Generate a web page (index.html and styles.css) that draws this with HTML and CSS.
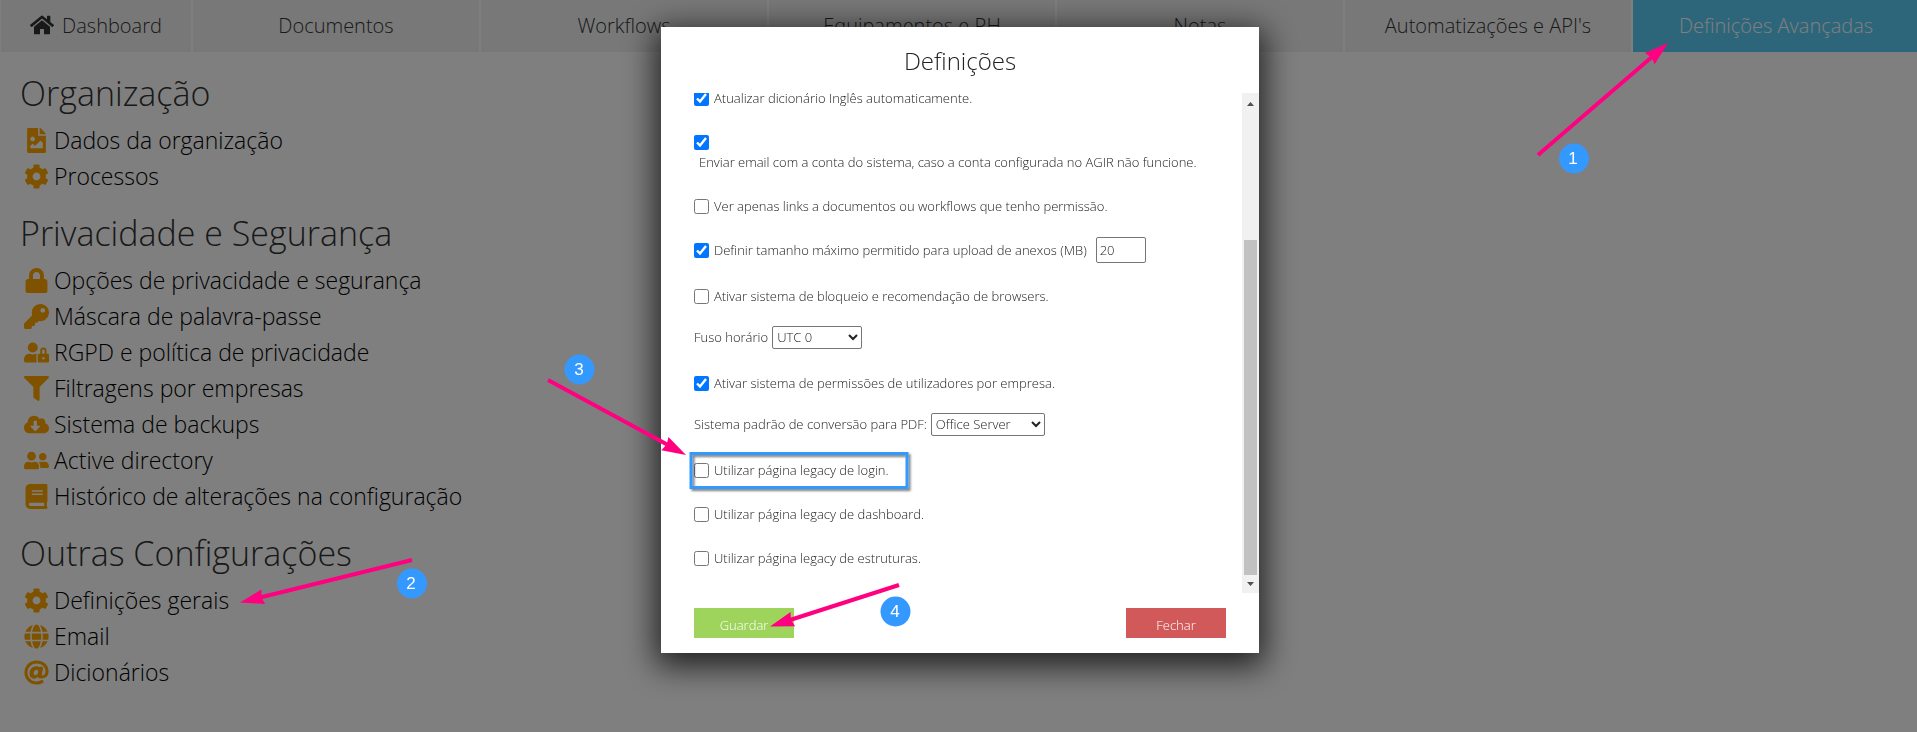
FILE: index.html
```html
<!DOCTYPE html>
<html lang="pt">
<head>
<meta charset="utf-8">
<title>Definições Avançadas</title>
<link rel="stylesheet" href="styles.css">
</head>
<body>
<svg class="sprite" aria-hidden="true">
  <symbol id="i-home" viewBox="0 0 576 512"><path d="M280.37 148.26L96 300.11V464a16 16 0 0 0 16 16l112.06-.29a16 16 0 0 0 15.92-16V368a16 16 0 0 1 16-16h64a16 16 0 0 1 16 16v95.64a16 16 0 0 0 16 16.05L464 480a16 16 0 0 0 16-16V300L295.67 148.26a12.19 12.19 0 0 0-15.3 0zM571.6 251.47L488 182.56V44.05a12 12 0 0 0-12-12h-56a12 12 0 0 0-12 12v72.61L318.47 43a48 48 0 0 0-61 0L4.34 251.47a12 12 0 0 0-1.6 16.9l25.5 31A12 12 0 0 0 45.15 301l235.22-193.74a12.19 12.19 0 0 1 15.3 0L530.9 301a12 12 0 0 0 16.9-1.6l25.5-31a12 12 0 0 0-1.7-16.93z"/></symbol>
  <symbol id="i-file" viewBox="0 0 384 512"><path d="M384 121.941V128H256V0h6.059a24 24 0 0 1 16.97 7.029l97.941 97.941a24.002 24.002 0 0 1 7.03 16.971zM248 160c-13.2 0-24-10.8-24-24V0H24C10.745 0 0 10.745 0 24v464c0 13.255 10.745 24 24 24h336c13.255 0 24-10.745 24-24V160H248zm-135.455 16c26.51 0 48 21.49 48 48s-21.49 48-48 48-48-21.49-48-48 21.491-48 48-48zm208 240h-256l.485-48.485L104.545 328c4.686-4.686 11.799-4.201 16.485.485L160.545 368 264.06 264.485c4.686-4.686 12.284-4.686 16.971 0L320.545 304v112z"/></symbol>
  <symbol id="i-cog" viewBox="0 0 512 512"><path d="M487.4 315.7l-42.6-24.6c4.3-23.2 4.3-47 0-70.2l42.6-24.6c4.9-2.8 7.1-8.6 5.5-14-11.1-35.6-30-67.8-54.7-94.6-3.8-4.1-10-5.1-14.8-2.3L380.8 110c-17.9-15.4-38.5-27.3-60.8-35.1V25.8c0-5.6-3.9-10.5-9.4-11.7-36.7-8.2-74.3-7.8-109.2 0-5.5 1.2-9.4 6.1-9.4 11.7V75c-22.2 7.9-42.8 19.8-60.8 35.1L88.7 85.5c-4.9-2.8-11-1.9-14.8 2.3-24.7 26.7-43.6 58.9-54.7 94.6-1.7 5.4.6 11.2 5.5 14L67.3 221c-4.3 23.2-4.3 47 0 70.2l-42.6 24.6c-4.9 2.8-7.1 8.6-5.5 14 11.1 35.6 30 67.8 54.7 94.6 3.8 4.1 10 5.1 14.8 2.3l42.6-24.6c17.9 15.4 38.5 27.3 60.8 35.1v49.2c0 5.6 3.9 10.5 9.4 11.7 36.7 8.2 74.3 7.8 109.2 0 5.5-1.2 9.4-6.1 9.4-11.7v-49.2c22.2-7.9 42.8-19.8 60.8-35.1l42.6 24.6c4.9 2.8 11 1.9 14.8-2.3 24.7-26.7 43.6-58.9 54.7-94.6 1.5-5.5-.7-11.3-5.6-14.1zM256 336c-44.1 0-80-35.9-80-80s35.9-80 80-80 80 35.9 80 80-35.9 80-80 80z"/></symbol>
  <symbol id="i-lock" viewBox="0 0 448 512"><path d="M400 224h-24v-72C376 68.2 307.8 0 224 0S72 68.2 72 152v72H48c-26.5 0-48 21.5-48 48v192c0 26.5 21.5 48 48 48h352c26.5 0 48-21.5 48-48V272c0-26.5-21.5-48-48-48zm-104 0H152v-72c0-39.7 32.3-72 72-72s72 32.3 72 72v72z"/></symbol>
  <symbol id="i-key" viewBox="0 0 512 512"><path d="M512 176.001C512 273.203 433.202 352 336 352c-11.22 0-22.19-1.062-32.827-3.069l-24.012 27.014A23.999 23.999 0 0 1 261.223 384H224v40c0 13.255-10.745 24-24 24h-40v40c0 13.255-10.745 24-24 24H24c-13.255 0-24-10.745-24-24v-78.059c0-6.365 2.529-12.47 7.029-16.971l161.802-161.802C163.108 213.814 160 195.271 160 176 160 78.798 238.797.001 335.999 0 433.488-.001 512 78.511 512 176.001zM336 128c0 26.51 21.49 48 48 48s48-21.49 48-48-21.49-48-48-48-48 21.49-48 48z"/></symbol>
  <symbol id="i-userlock" viewBox="0 0 640 512"><path d="M224 256A128 128 0 1 0 96 128a128 128 0 0 0 128 128zm96 64a63.08 63.08 0 0 1 8.1-30.5c-4.8-.5-9.5-1.5-14.5-1.5h-16.7a174.08 174.08 0 0 1-145.8 0h-16.7A134.43 134.43 0 0 0 0 422.4V464a48 48 0 0 0 48 48h280.9a63.54 63.54 0 0 1-8.9-32zm288-32h-32v-80a80 80 0 0 0-160 0v80h-32a32 32 0 0 0-32 32v160a32 32 0 0 0 32 32h224a32 32 0 0 0 32-32V320a32 32 0 0 0-32-32zM496 432a32 32 0 1 1 32-32 32 32 0 0 1-32 32zm32-144h-64v-80a32 32 0 0 1 64 0z"/></symbol>
  <symbol id="i-filter" viewBox="0 0 512 512"><path d="M487.976 0H24.028C2.71 0-8.047 25.866 7.058 40.971L192 225.941V432c0 7.831 3.821 15.17 10.237 19.662l80 55.98C298.02 518.69 320 507.493 320 487.98V225.941l184.947-184.97C520.021 25.896 509.338 0 487.976 0z"/></symbol>
  <symbol id="i-cloud" viewBox="0 0 640 512"><path d="M537.6 226.6c4.1-10.7 6.4-22.4 6.4-34.6 0-53-43-96-96-96-19.7 0-38.1 6-53.3 16.2C367 64.2 315.3 32 256 32c-88.4 0-160 71.6-160 160 0 2.7.1 5.4.2 8.1C40.2 219.8 0 273.2 0 336c0 79.5 64.5 144 144 144h368c70.7 0 128-57.3 128-128 0-61.9-44-113.6-102.4-125.4zm-132.9 88.7L299.3 420.7c-6.2 6.2-16.4 6.2-22.6 0L171.3 315.3c-10.1-10.1-2.9-27.3 11.3-27.3H248V176c0-8.8 7.2-16 16-16h48c8.8 0 16 7.2 16 16v112h65.4c14.2 0 21.4 17.2 11.3 27.3z"/></symbol>
  <symbol id="i-users" viewBox="0 0 640 512"><path d="M192 256c61.9 0 112-50.1 112-112S253.9 32 192 32 80 82.1 80 144s50.1 112 112 112zm76.8 32h-8.3c-20.8 10-43.9 16-68.5 16s-47.6-6-68.5-16h-8.3C51.6 288 0 339.6 0 403.2V432c0 26.5 21.5 48 48 48h288c26.5 0 48-21.5 48-48v-28.8c0-63.6-51.6-115.2-115.2-115.2zM480 256c53 0 96-43 96-96s-43-96-96-96-96 43-96 96 43 96 96 96zm48 32h-3.8c-13.9 4.8-28.6 8-44.2 8s-30.3-3.2-44.2-8H432c-20.4 0-39.2 5.9-55.7 15.4 24.4 26.3 39.7 61.2 39.7 99.8v38.4c0 2.2-.5 4.3-.6 6.4H592c26.5 0 48-21.5 48-48 0-61.9-50.1-112-112-112z"/></symbol>
  <symbol id="i-book" viewBox="0 0 448 512"><path d="M448 360V24c0-13.3-10.7-24-24-24H96C43 0 0 43 0 96v320c0 53 43 96 96 96h328c13.3 0 24-10.7 24-24v-16c0-7.5-3.5-14.3-8.9-18.7-4.2-15.4-4.2-59.3 0-74.7 5.4-4.3 8.9-11.1 8.9-18.6zM128 134c0-3.3 2.7-6 6-6h212c3.3 0 6 2.7 6 6v20c0 3.3-2.7 6-6 6H134c-3.3 0-6-2.7-6-6v-20zm0 64c0-3.3 2.7-6 6-6h212c3.3 0 6 2.7 6 6v20c0 3.3-2.7 6-6 6H134c-3.3 0-6-2.7-6-6v-20zm253.4 250H96c-17.7 0-32-14.3-32-32 0-17.6 14.4-32 32-32h285.4c-1.9 17.1-1.9 46.9 0 64z"/></symbol>
  <symbol id="i-globe" viewBox="0 0 496 512"><path d="M336.5 160C322 70.7 287.8 8 248 8s-74 62.7-88.5 152h177zM152 256c0 22.2 1.2 43.5 3.3 64h185.3c2.1-20.5 3.3-41.8 3.3-64s-1.2-43.5-3.3-64H155.3c-2.1 20.5-3.3 41.8-3.3 64zm324.7-96c-28.6-67.9-86.5-120.4-158-141.6 24.4 33.8 41.2 84.7 50 141.6h108zM177.2 18.4C105.8 39.6 47.8 92.1 19.3 160h108c8.7-56.9 25.5-107.8 49.9-141.6zM487.4 192H372.7c2.1 21 3.3 42.5 3.3 64s-1.2 43-3.3 64h114.6c5.5-20.5 8.6-41.8 8.6-64s-3.1-43.5-8.5-64zM120 256c0-21.5 1.2-43 3.3-64H8.6C3.2 212.5 0 233.8 0 256s3.2 43.5 8.6 64h114.6c-2-21-3.2-42.5-3.2-64zm39.5 96c14.5 89.3 48.7 152 88.5 152s74-62.7 88.5-152h-177zm159.3 141.6c71.4-21.2 129.4-73.7 158-141.6h-108c-8.8 56.9-25.6 107.8-50 141.6zM19.3 352c28.6 67.9 86.5 120.4 158 141.6-24.4-33.8-41.2-84.7-50-141.6h-108z"/></symbol>
  <symbol id="i-at" viewBox="0 0 512 512"><path d="M256 8C118.941 8 8 118.919 8 256c0 137.059 110.919 248 248 248 48.154 0 95.342-14.14 135.408-40.223 12.005-7.815 14.625-24.288 5.552-35.372l-10.177-12.433c-7.671-9.371-21.179-11.667-31.373-5.129C325.92 429.757 291.314 440 256 440c-101.458 0-184-82.542-184-184S154.542 72 256 72c100.139 0 184 57.619 184 160 0 38.786-21.093 79.742-58.17 83.693-17.349-.454-16.91-12.857-13.476-30.024l23.433-121.11C394.653 149.75 383.308 136 368.225 136h-44.981a13.518 13.518 0 0 0-13.432 11.993l-.01.092c-14.697-17.901-40.448-21.775-59.971-21.775-74.58 0-137.831 62.234-137.831 151.46 0 65.303 36.785 105.87 96 105.87 26.984 0 57.369-15.637 74.991-38.333 9.522 34.104 40.613 34.104 70.71 34.104C462.609 379.41 504 307.798 504 232 504 95.653 394.023 8 256 8zm-21.68 304.43c-22.249 0-36.07-15.623-36.07-40.771 0-44.993 30.779-72.729 58.63-72.729 22.292 0 35.601 15.241 35.601 40.77 0 45.061-33.875 72.73-58.161 72.73z"/></symbol>
</svg>

<nav class="tabs">
  <a class="tab tab-home" href="#"><svg class="home-icon"><use href="#i-home"/></svg>Dashboard</a>
  <a class="tab" href="#">Documentos</a>
  <a class="tab" href="#">Workflows</a>
  <a class="tab" href="#">Equipamentos e RH</a>
  <a class="tab" href="#">Notas</a>
  <a class="tab" href="#">Automatizações e API's</a>
  <a class="tab tab-active" href="#">Definições Avançadas</a>
</nav>

<main class="settings">
  <section>
    <h2>Organização</h2>
    <ul>
      <li><a href="#"><svg><use href="#i-file"/></svg>Dados da organização</a></li>
      <li><a href="#"><svg><use href="#i-cog"/></svg>Processos</a></li>
    </ul>
  </section>
  <section>
    <h2>Privacidade e Segurança</h2>
    <ul>
      <li><a href="#"><svg><use href="#i-lock"/></svg>Opções de privacidade e segurança</a></li>
      <li><a href="#"><svg><use href="#i-key"/></svg>Máscara de palavra-passe</a></li>
      <li><a href="#"><svg><use href="#i-userlock"/></svg>RGPD e política de privacidade</a></li>
      <li><a href="#"><svg><use href="#i-filter"/></svg>Filtragens por empresas</a></li>
      <li><a href="#"><svg><use href="#i-cloud"/></svg>Sistema de backups</a></li>
      <li><a href="#"><svg><use href="#i-users"/></svg>Active directory</a></li>
      <li><a href="#"><svg><use href="#i-book"/></svg>Histórico de alterações na configuração</a></li>
    </ul>
  </section>
  <section>
    <h2>Outras Configurações</h2>
    <ul>
      <li><a href="#"><svg><use href="#i-cog"/></svg>Definições gerais</a></li>
      <li><a href="#"><svg><use href="#i-globe"/></svg>Email</a></li>
      <li><a href="#"><svg><use href="#i-at"/></svg>Dicionários</a></li>
    </ul>
  </section>
</main>

<div class="overlay">
  <div class="modal" role="dialog" aria-labelledby="modal-title">
    <h1 id="modal-title">Definições</h1>
    <div class="scroll">
      <form class="options" id="options">
        <label class="row"><input type="checkbox" checked><span>Atualizar dicionário Inglês automaticamente.</span></label>
        <label class="row row-stacked"><input type="checkbox" checked><span>Enviar email com a conta do sistema, caso a conta configurada no AGIR não funcione.</span></label>
        <label class="row"><input type="checkbox"><span>Ver apenas links a documentos ou workflows que tenho permissão.</span></label>
        <div class="row row-input">
          <input type="checkbox" id="limit" checked><label for="limit">Definir tamanho máximo permitido para upload de anexos (MB)</label>
          <input type="text" class="number" value="20" aria-label="Tamanho máximo (MB)">
        </div>
        <label class="row"><input type="checkbox"><span>Ativar sistema de bloqueio e recomendação de browsers.</span></label>
        <div class="row row-select"><label for="tz">Fuso horário</label><select id="tz" class="tz"><option>UTC 0</option></select></div>
        <label class="row"><input type="checkbox" checked><span>Ativar sistema de permissões de utilizadores por empresa.</span></label>
        <div class="row row-select"><label for="pdf">Sistema padrão de conversão para PDF:</label><select id="pdf" class="pdf"><option>Office Server</option></select></div>
        <label class="row"><input type="checkbox"><span>Utilizar página legacy de login.</span></label>
        <label class="row"><input type="checkbox"><span>Utilizar página legacy de dashboard.</span></label>
        <label class="row"><input type="checkbox"><span>Utilizar página legacy de estruturas.</span></label>
      </form>
      <div class="scrollbar" aria-hidden="true">
        <svg viewBox="0 0 17 17"><path d="M5 13h7L8.500 9z"/></svg>
        <div class="track"><div class="thumb"></div></div>
        <svg viewBox="0 0 17 17"><path d="M5 6h7l-3.500 4z"/></svg>
      </div>
    </div>
    <div class="actions">
      <button type="submit" form="options" class="save">Guardar</button>
      <button type="button" class="close">Fechar</button>
    </div>
  </div>
</div>

<svg class="notes" viewBox="0 0 1917 732">
  <defs>
    <filter id="drop" x="-5%" y="-30%" width="112%" height="170%"><feDropShadow dx="2" dy="2" stdDeviation="1" flood-opacity=".5"/></filter>
  </defs>
  <rect class="focus" x="691" y="453.500" width="216" height="34" filter="url(#drop)"/>
  <g class="arrows">
    <path d="M1538 155L1653 56"/><path d="M412 560L260 597.500"/><path d="M548 380L668 445"/><path d="M899 585L790 620"/>
  </g>
  <g class="heads">
    <path transform="translate(1668 43) rotate(-40.700)" d="M0 0L-24 -7.500L-22 0L-24 7.500z"/>
    <path transform="translate(240 602.500) rotate(166.100)" d="M0 0L-24 -7.500L-22 0L-24 7.500z"/>
    <path transform="translate(686 455) rotate(28.500)" d="M0 0L-24 -7.500L-22 0L-24 7.500z"/>
    <path transform="translate(770 626.500) rotate(162.200)" d="M0 0L-24 -7.500L-22 0L-24 7.500z"/>
  </g>
  <g class="badges">
    <circle cx="1574" cy="158.500" r="15"/><circle cx="412" cy="583.500" r="15"/><circle cx="579.500" cy="369.500" r="15"/><circle cx="895.500" cy="611.500" r="15"/>
  </g>
  <g class="digits">
    <text x="1573" y="164">1</text><text x="411" y="589">2</text><text x="579" y="375">3</text><text x="895" y="617">4</text>
  </g>
</svg>
</body>
</html>
```
FILE: styles.css
```css
* { box-sizing: border-box; }
body {
  margin: 0;
  min-height: 100vh;
  overflow: hidden;
  background: #fff;
  color: #000;
  font-family: "Open Sans", "Noto Sans", sans-serif;
  font-weight: 300;
}
a { color: inherit; text-decoration: none; }
.sprite { display: none; }

.tabs {
  display: grid;
  grid-template-columns: 2fr repeat(6, 3fr);
  margin-right: -3px;
}
.tab {
  display: flex;
  align-items: center;
  justify-content: center;
  height: 52px;
  padding-bottom: 2px;
  border: solid #fff;
  border-width: 0 1px;
  background: #f0f0f0;
  color: #333;
  font-size: 20px;
}
.tab-active { background: #5bccf5; color: #fff; }
.home-icon { width: 24px; height: 24px; margin-right: 8px; fill: #333; }

.settings { padding: 2px 20px; }
.settings h2 {
  margin: 0;
  padding: 15px 0 5px;
  font-size: 34px;
  font-weight: 300;
  line-height: 48px;
  color: #333;
}
.settings ul { margin: 0; padding: 0 4px; list-style: none; }
.settings li a {
  display: flex;
  align-items: center;
  gap: 5px;
  font-size: 23px;
  line-height: 36px;
}
.settings li svg { width: 25px; height: 25px; fill: #ffa500; }

.overlay {
  position: fixed;
  inset: 0;
  display: flex;
  justify-content: center;
  align-items: flex-start;
  padding: 27px 0 0 3px;
  background: rgba(0, 0, 0, .5);
}
.modal {
  width: 598px;
  padding-bottom: 15px;
  background: #fff;
  color: #222;
  font-size: 13px;
  box-shadow: 0 8px 30px 5px rgba(0, 0, 0, .75);
}
.modal h1 {
  margin: 0;
  padding-top: 2px;
  font-size: 24px;
  font-weight: 300;
  line-height: 64px;
  text-align: center;
}
.scroll { display: flex; height: 500px; }
.options {
  flex: 1;
  display: flex;
  flex-direction: column;
  justify-content: flex-end;
  overflow: hidden;
  padding: 0 0 13px 33px;
}
.row { display: flex; flex: none; align-items: center; height: 44px; }
.row span, .row label { line-height: 16px; }
.row input[type="checkbox"] { width: 15px; height: 15px; margin: 0 5px 0 0; accent-color: #0075ff; }
.row-stacked { flex-direction: column; justify-content: center; align-items: flex-start; gap: 4px; height: 64px; }
.row-stacked span { padding-left: 5px; }
.row-input { height: 46px; padding-bottom: 2px; }
.row-select { gap: 4px; height: 43px; padding-bottom: 5px; }
.number, .row select {
  border: 1px solid #767676;
  border-radius: 2px;
  background: #fff;
  color: #222;
  font: inherit;
}
.number { width: 50px; height: 26px; margin-left: 9px; padding: 0 3px; }
.row select { height: 23px; padding: 0; }
.row .tz { width: 90px; }
.row .pdf { width: 114px; }

.scrollbar { display: flex; flex-direction: column; width: 17px; background: #f1f1f1; }
.scrollbar svg { width: 17px; height: 17px; fill: #505050; }
.track { flex: 1; display: flex; flex-direction: column; justify-content: flex-end; padding: 0 2px 1px; }
.thumb { height: 72%; background: #c1c1c1; }

.actions { display: flex; justify-content: space-between; padding: 15px 33px 0; }
.actions button {
  width: 100px;
  height: 30px;
  padding: 3px 0 0;
  border: 0;
  color: #fff;
  font: inherit;
}
.save { background: #9ed35c; }
.close { background: #d15959; }

.notes { position: fixed; inset: 0; width: 100%; height: 100%; pointer-events: none; }
.focus { fill: none; stroke: #39f; stroke-width: 3px; }
.arrows { fill: none; stroke: #ff0080; stroke-width: 4px; }
.heads { fill: #ff0080; }
.badges { fill: #39f; }
.digits { fill: #fff; font: 400 17px "Liberation Sans", sans-serif; text-anchor: middle; }
```
